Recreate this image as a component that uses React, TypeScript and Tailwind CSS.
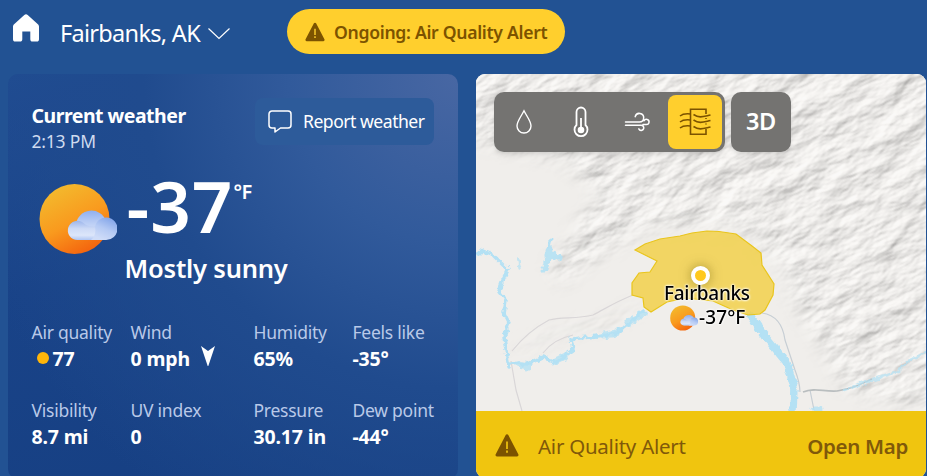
import type { ReactNode } from "react";

function WeatherIcon({ className, id }: { className: string; id: string }) {
  return (
    <svg className={className} viewBox="0 0 78 72" fill="none">
      <defs>
        <linearGradient id={`${id}-sun`} x1="14" y1="6" x2="46" y2="68" gradientUnits="userSpaceOnUse">
          <stop stopColor="#f3b92d" />
          <stop offset="0.55" stopColor="#f99a1e" />
          <stop offset="1" stopColor="#f4670f" />
        </linearGradient>
        <linearGradient id={`${id}-puff`} x1="0" y1="25" x2="0" y2="50" gradientUnits="userSpaceOnUse">
          <stop stopColor="#86a9ee" />
          <stop offset="0.5" stopColor="#b3c8f3" />
          <stop offset="1" stopColor="#d9e4fa" />
        </linearGradient>
        <linearGradient id={`${id}-left`} x1="0" y1="38" x2="0" y2="57" gradientUnits="userSpaceOnUse">
          <stop stopColor="#9db6ec" />
          <stop offset="0.4" stopColor="#cddaf6" />
          <stop offset="0.75" stopColor="#dce6fa" />
          <stop offset="1" stopColor="#b0c6f3" />
        </linearGradient>
        <linearGradient id={`${id}-right`} x1="74" y1="35" x2="64" y2="57" gradientUnits="userSpaceOnUse">
          <stop stopColor="#7fa2e8" />
          <stop offset="0.55" stopColor="#b5caf4" />
          <stop offset="1" stopColor="#cfdcf8" />
        </linearGradient>
      </defs>
      <circle cx="35.5" cy="36" r="35" fill={`url(#${id}-sun)`} />
      <path d="M37 41a15.500 15.500 0 0 1 30-3l1 18H38z" fill={`url(#${id}-puff)`} />
      <path d="M38.500 57a9.600 9.600 0 1 1 6-17c4 4 12 5 22 0v17z" fill={`url(#${id}-left)`} />
      <path d="M56 44a11.300 11.300 0 1 1 11 13H52c4-3 5-8 4-13z" fill={`url(#${id}-right)`} />
    </svg>
  );
}

function AlertTriangle({ className, mark }: { className: string; mark: string }) {
  return (
    <svg className={className} viewBox="0 0 24 23">
      <path d="M10.7 1.1a1.5 1.5 0 0 1 2.6 0l10 19.2a1.5 1.5 0 0 1-1.3 2.2H2a1.5 1.5 0 0 1-1.3-2.2z" fill="#7c5300" />
      <path d="M12 7.5v7.6M12 16.6v2.2" stroke={mark} strokeWidth="1.7" />
    </svg>
  );
}

function Header() {
  return (
    <header className="flex h-[74px] shrink-0 items-start">
      <svg className="ml-3 mt-[14px] h-7 w-7 shrink-0" viewBox="0 0 28 28">
        <path d="M12.3 1.1a2.5 2.5 0 0 1 3.4 0l10.2 9.2c.8.7 1.1 1.500 1.100 2.500v12.400c0 1.500-.8 2.300-2.200 2.300h-4.300c-1.400 0-2.200-.8-2.200-2.300v-7.700h-8v7.700c0 1.500-.8 2.300-2.200 2.300H3.200c-1.400 0-2.200-.8-2.200-2.300V12.800c0-1 .3-1.800 1.100-2.500z" fill="#fff" />
      </svg>
      <span className="ml-5 mt-4 w-[148px] text-[23.5px] leading-[34px] tracking-[-0.7px]">Fairbanks, AK</span>
      <svg className="mt-[27px] h-[13px] w-[22px] shrink-0" viewBox="0 0 22 13" fill="none">
        <path d="M.5 1.500 11 11.500 21.500 1.500" stroke="#fff" strokeWidth="1.2" />
      </svg>
      <button className="ml-[57px] mt-[9px] flex h-[45px] w-[278px] items-center rounded-full bg-[#ffcf2d] pl-[18px] text-[#7c5300]">
        <AlertTriangle className="h-5 w-5" mark="#ffcf2d" />
        <span className="ml-[9px] mt-[2px] whitespace-nowrap text-[17.6px] font-semibold tracking-[-0.3px]">Ongoing: Air Quality Alert</span>
      </button>
    </header>
  );
}

function Metric({ label, children }: { label: string; children: ReactNode }) {
  return (
    <div className="h-[78px] whitespace-nowrap">
      <div className="-mt-px text-[17.5px] leading-[26px] tracking-[-0.25px] text-[#b9c9e8]">{label}</div>
      <div className="mt-px flex h-[26px] items-center text-[19.5px] font-bold leading-[26px] tracking-[-0.15px]">{children}</div>
    </div>
  );
}

function CurrentWeather() {
  return (
    <section className="h-[405px] w-[450px] shrink-0 rounded-[10px] bg-[radial-gradient(circle_at_100%_0%,#4867a3_0%,#315a9b_28%,#204b8e_52%,transparent_85%),linear-gradient(165deg,#204c92_0%,#194388_42%,#163f82_100%)] pl-[23.5px]">
      <div className="flex h-[100px] pt-6">
        <div className="w-[223.5px]">
          <h1 className="mt-1 text-[19.5px] font-bold leading-[28px] tracking-[-0.5px]">Current weather</h1>
          <div className="-mt-px text-[17.5px] leading-[24px] tracking-[-0.2px] text-[#cfdbef]">2:13 PM</div>
        </div>
        <button className="flex h-[47px] w-[179px] items-center rounded-lg bg-[#2d5b9a] pl-[13px]">
          <svg className="h-[23px] w-[24px]" viewBox="0 0 24 23" fill="none" stroke="#fff" strokeWidth="1.5" strokeLinejoin="round">
            <path d="M4 1h16a3 3 0 0 1 3 3v11a3 3 0 0 1-3 3h-7.500L7 22v-4H4a3 3 0 0 1-3-3V4a3 3 0 0 1 3-3z" />
          </svg>
          <span className="-mt-px ml-[11px] whitespace-nowrap text-[17.6px] tracking-[-0.5px]">Report weather</span>
        </button>
      </div>
      <div className="flex h-[79px]">
        <WeatherIcon id="current" className="ml-[7px] mt-[9px] h-[72px] w-[78px]" />
        <span className="-mt-[2px] ml-[10px] text-[71px] font-semibold leading-[68px] tracking-[1px]">-37</span>
        <span className="mt-[4px] text-[20px] font-semibold leading-[28px] tracking-[-0.5px]">°F</span>
      </div>
      <div className="-mt-px ml-[93px] h-[68px] text-[25.5px] font-semibold leading-[32px] tracking-[-0.2px]">Mostly sunny</div>
      <div className="grid grid-cols-[99px_123px_99px_90px]">
        <Metric label="Air quality">
          <span className="ml-[5px] mr-1 h-3 w-3 -translate-y-px rounded-full bg-[#ffb60a]" />
          <span>77</span>
        </Metric>
        <Metric label="Wind">
          <span>0 mph</span>
          <svg className="-mt-[6px] ml-[11px] h-5 w-[14px]" viewBox="0 0 14 20">
            <path d="M0 0 7 5 14 0 7.300 20h-.6z" fill="#fff" />
          </svg>
        </Metric>
        <Metric label="Humidity">65%</Metric>
        <Metric label="Feels like">-35°</Metric>
        <Metric label="Visibility">8.7 mi</Metric>
        <Metric label="UV index">0</Metric>
        <Metric label="Pressure">30.17 in</Metric>
        <Metric label="Dew point">-44°</Metric>
      </div>
    </section>
  );
}

function MapTerrain() {
  return (
    <svg className="absolute inset-0 h-[337px] w-[450px]" viewBox="0 0 450 337" fill="none">
      <defs>
        <filter id="relief" x="0" y="0" width="1" height="1" colorInterpolationFilters="sRGB">
          <feTurbulence type="fractalNoise" baseFrequency="0.026 0.05" numOctaves="4" seed="12" />
          <feDiffuseLighting surfaceScale="3" diffuseConstant="1.07" lightingColor="#f3f2f0">
            <feDistantLight azimuth="250" elevation="64" />
          </feDiffuseLighting>
          <feGaussianBlur stdDeviation="0.6" />
        </filter>
        <filter id="soften" x="-20%" y="-20%" width="140%" height="140%">
          <feGaussianBlur stdDeviation="9" />
        </filter>
        <filter id="shore" x="-20%" y="-20%" width="140%" height="140%">
          <feTurbulence type="fractalNoise" baseFrequency="0.18" numOctaves="2" seed="4" />
          <feDisplacementMap in="SourceGraphic" scale="7" xChannelSelector="R" yChannelSelector="G" />
          <feGaussianBlur stdDeviation="0.7" />
        </filter>
        <mask id="mountains" maskUnits="userSpaceOnUse" x="0" y="0" width="450" height="337">
          <g filter="url(#soften)" fill="#fff">
            <path d="M-20-20h490v352l-55-4-44-10-25-45-27-39-7-33-45-45-90-4-44 23-48 34-13-13 29-42 21-38-38-31-57-12-57-12z" opacity="0.66" />
            <path d="m35 276 43-22 54-12 40-15-24 23-61 11-46 20z" opacity="0.3" />
          </g>
        </mask>
      </defs>
      <path d="M0 0h450v337H0z" fill="#f0eeeb" />
      <g mask="url(#mountains)">
        <rect x="-250" y="-200" width="900" height="750" transform="rotate(-25 225 168)" filter="url(#relief)" fill="#fff" />
      </g>
      <g stroke="#d7d4d6" strokeWidth="1.2" opacity="0.9">
        <path d="M36 277c8-10 20-22 37-31 13-3 28-1 44-5 12-6 20-12 40-20" />
        <path d="M67 279c6-8 16-15 30-18M35 287l5 29 6 21" />
        <path d="M286 239c14 2 21 12 23 27l10 30c3 8 5 14 5 22M334 316l4 20" stroke="#c3cbd2" />
        <path d="M327 318c12-5 20 0 34-1 16-3 22-6 35-12" stroke="#b4b9bb" strokeWidth="1.6" />
      </g>
      <g stroke="#b4e1f4" filter="url(#shore)" strokeLinecap="round" strokeLinejoin="round">
        <path d="m0 181 7-4 10 4 6 6 9 9-5 10-4 11 7 9-2 13 5 10-5 14 3 20 2 10" strokeWidth="3.500" />
        <path d="m75 166-2 8" strokeWidth="3" />
        <path d="m73 176-1 8-3 11M72 180l11 3" strokeWidth="7" opacity="0.9" />
        <path d="m43 186 1 7" strokeWidth="3.500" opacity="0.7" />
        <path d="m35 289 15 2 17-8 13 5 17-12-2-11 35-4 10-2 10-8 18-14" strokeWidth="3.500" />
        <path d="m42 290 10 2M80 287l8-4M128 261l12-2M152 249l16-10" strokeWidth="7" opacity="0.8" />
        <path d="m275 242 12 18 24 29 7 24-1 24" strokeWidth="7.500" />
        <path d="m278 248 14 18M336 335h8" strokeWidth="5" opacity="0.8" />
        <path d="m368 316 28-10 25-8 10-10 19-10" strokeWidth="2.500" opacity="0.7" />
      </g>
      <path
        d="m159 176 10-6 15-5 20-3 12-3 15-2 12 .5 17 2.500 16 12 9 7 1 12 12 19-1 11-8 15-5 4-12 1-15-5-20-9-27-3-19 4-16 10-7-5-1-9-11-3v-12l7-10 11-1 7-11z"
        fill="#f1cf44"
        fillOpacity="0.82"
        stroke="#e9c51d"
        strokeWidth="1.2"
      />
    </svg>
  );
}

function LayerToolbar() {
  return (
    <div className="relative flex gap-[6px] pl-[18px] pt-[18px]">
      <div className="flex h-[60px] w-[231px] items-center rounded-[10px] bg-[#747371] shadow-md">
        <svg className="ml-5 h-[26px] w-5" viewBox="0 0 20 26" fill="none" stroke="#fff" strokeWidth="1.4">
          <path d="M10 1.800C7.500 7 3 12 3 17a7 7 0 0 0 14 0c0-5-4.500-10-7-15.200z" />
        </svg>
        <svg className="ml-[38px] h-8 w-[18px]" viewBox="0 0 18 32" fill="none" stroke="#fff">
          <path d="M4.500 19V6a4.500 4.500 0 0 1 9 0v13a6.500 6.500 0 1 1-9 0z" strokeWidth="1.8" />
          <path d="M9 12v11" strokeWidth="1.8" />
          <circle cx="9" cy="24" r="3.300" fill="#fff" stroke="none" />
        </svg>
        <svg className="ml-[34px] h-5 w-[27px]" viewBox="0 0 27 20" fill="none" stroke="#fff" strokeWidth="1.5" strokeLinecap="round">
          <path d="M1.500 10h14a4.300 4.300 0 1 0-4.300-5.300M1.500 13.200h15.700a2.600 2.600 0 1 1-2.400 3.700M19 12.500h3.500a2.600 2.600 0 1 0-2.400-3.700" />
        </svg>
        <div className="ml-[17px] flex h-[54px] w-[54px] items-center justify-center rounded-lg bg-[#ffcf2d]">
          <svg className="h-7 w-8" viewBox="0 0 32 28" fill="none" stroke="#7c5300" strokeWidth="1.6">
            <path d="M27 6V1.200H11.500v25H27V21M27 10v1M27 15.500v1" />
            <path d="M1 8C4 5.500 7 5.500 11.500 6M1 14c3-2.500 6-2.500 10.500-2M1 20c3-2.500 6-2.500 10.500-2" />
            <path d="M14.500 6.500c6 4 10 2 17 .5M14.500 12c6 4 10 2 17 .5M14.500 18.500c6 4 10 2 17 .5" />
          </svg>
        </div>
      </div>
      <button className="h-[60px] w-[60px] rounded-[10px] bg-[#747371] text-[23.5px] font-semibold tracking-[-0.3px] text-white shadow-md">3D</button>
    </div>
  );
}

function MapCard() {
  return (
    <section className="relative flex h-[404px] w-[450px] shrink-0 flex-col overflow-hidden rounded-[9px] bg-[#f0eeeb]">
      <div className="relative h-[337px] shrink-0">
        <MapTerrain />
        <LayerToolbar />
        <div className="absolute left-[215px] top-[192px] h-[19px] w-[19px] rounded-full border-[4.5px] border-white bg-[#ffc91e] shadow-[0_0_12px_rgba(100,80,0,0.5)]" />
        <div className="absolute left-[188px] top-[207px] whitespace-nowrap text-[19px] font-medium leading-[24px] tracking-[-0.3px] text-black [text-shadow:0_0_2px_#fff,0_0_2px_#fff,0_0_3px_#fff]">Fairbanks</div>
        <div className="absolute left-[194px] top-[230px] flex items-center text-[19px] font-medium leading-[24px] text-black [text-shadow:0_0_2px_#fff,0_0_2px_#fff,0_0_3px_#fff]">
          <WeatherIcon id="pin" className="mt-px h-[26px] w-[28px]" />
          <span className="-mt-[2px] ml-px tracking-[0.1px]">-37°F</span>
        </div>
      </div>
      <div className="flex h-[67px] items-center bg-[#f0c50f] pb-[2px] pl-[19px] pr-[18px] text-[#80590a]">
        <AlertTriangle className="mt-1 h-[23px] w-6" mark="#f0c50f" />
        <span className="ml-[19px] mt-[6px] whitespace-nowrap text-[20.5px] tracking-[-0.25px]">Air Quality Alert</span>
        <span className="ml-auto mt-[6px] whitespace-nowrap text-[20.5px] font-semibold tracking-[-0.3px]">Open Map</span>
      </div>
    </section>
  );
}

export default function App() {
  return (
    <main className="flex h-[476px] w-[927px] flex-col overflow-hidden bg-[#225293] font-['Noto_Sans','Open_Sans',sans-serif] text-white">
      <Header />
      <div className="flex gap-[18px] pl-2">
        <CurrentWeather />
        <MapCard />
      </div>
    </main>
  );
}
